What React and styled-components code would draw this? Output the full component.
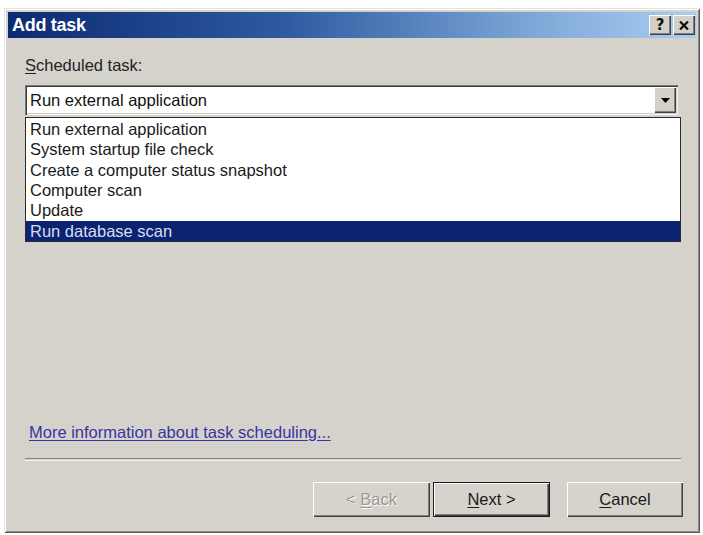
import React from "react";
import styled, { createGlobalStyle } from "styled-components";

const Global = createGlobalStyle`
  html, body { margin: 0; padding: 0; background: #ffffff; }
  body { font-family: "Liberation Sans", Arial, sans-serif; }
`;

const Page = styled.div`
  width: 703px;
  height: 535px;
  padding: 8px 0 0 4px;
  box-sizing: border-box;
`;

const Window = styled.div`
  width: 696px;
  height: 525px;
  box-sizing: border-box;
  padding: 4px;
  background: #d5d2cb;
  box-shadow: inset 1px 1px 0 #e4e2dc, inset -1px -1px 0 #5a5a58,
    inset 2px 2px 0 #ffffff, inset -2px -2px 0 #8e8c88;
  display: flex;
  flex-direction: column;
`;

const TitleBar = styled.div`
  height: 26px;
  background: linear-gradient(to right, #0c2a72 0%, #2e5aa0 40%, #86aedc 80%, #a9cdf2 100%);
  display: flex;
  align-items: center;
  padding: 0 1px 0 4px;
`;

const Title = styled.div`
  flex: 1;
  color: #ffffff;
  font-weight: bold;
  font-size: 18px;
  letter-spacing: -0.3px;
`;

const CaptionButton = styled.div`
  width: 22px;
  height: 20px;
  margin-left: 2px;
  box-sizing: border-box;
  background: #d4d0c8;
  box-shadow: inset 1px 1px 0 #ffffff, inset -1px -1px 0 #404040, inset -2px -2px 0 #808080;
  display: flex;
  align-items: center;
  justify-content: center;
  font-weight: bold;
  font-size: 15px;
  color: #111;
  font-family: "DejaVu Sans", sans-serif;
`;

const Body = styled.div`
  flex: 1;
  display: flex;
  flex-direction: column;
  padding: 18px 15px 12px 17px;
  font-size: 16.5px;
  color: #111;
`;

const Label = styled.div`
  line-height: 18px;
  height: 18px;
  color: #222;
`;

const Access = styled.span`
  text-decoration: underline;
  text-underline-offset: 2px;
`;

const Combo = styled.div`
  margin-top: 11px;
  margin-right: 3px;
  height: 30px;
  box-sizing: border-box;
  background: #ffffff;
  box-shadow: inset 1px 1px 0 #7e7c78, inset 2px 2px 0 #3a3a3a, inset -1px -1px 0 #f4f4f2,
    inset -2px -2px 0 #d4d0c8;
  display: flex;
  align-items: center;
  padding: 2px;
`;

const ComboText = styled.div`
  flex: 1;
  padding-left: 3px;
`;

const DropButton = styled.div`
  width: 22px;
  height: 26px;
  box-sizing: border-box;
  background: #d4d0c8;
  box-shadow: inset 1px 1px 0 #ffffff, inset -1px -1px 0 #404040, inset -2px -2px 0 #808080;
  display: flex;
  align-items: center;
  justify-content: center;
`;

const List = styled.div`
  margin-top: 2px;
  height: 125px;
  box-sizing: border-box;
  border: 1px solid #2a2a2a;
  background: #ffffff;
  padding-top: 1px;
  display: flex;
  flex-direction: column;
`;

const Item = styled.div`
  height: 20.5px;
  line-height: 20px;
  padding-left: 4px;
  background: ${(p) => (p.$selected ? "#0b2370" : "transparent")};
  color: ${(p) => (p.$selected ? "#d8deef" : "#1a1a1a")};
`;

const Spacer = styled.div`
  flex: 1;
`;

const Link = styled.a`
  color: #3a33a6;
  text-decoration: underline;
  text-underline-offset: 2px;
  margin-left: 4px;
  line-height: 20px;
  cursor: pointer;
`;

const Separator = styled.div`
  margin-top: 16px;
  height: 1px;
  border-top: 1px solid #8a8884;
  border-bottom: 1px solid #f4f3f0;
`;

const ButtonRow = styled.div`
  margin-top: 21px;
  margin-right: -2px;
  display: flex;
  justify-content: flex-end;
`;

const Button = styled.div`
  width: ${(p) => p.$w || 117}px;
  height: 35px;
  box-sizing: border-box;
  margin-left: ${(p) => p.$gap || 0}px;
  background: #d6d3cc;
  box-shadow: ${(p) =>
    p.$default
      ? "inset 0 0 0 1px #1a1a1a, inset 2px 2px 0 #ffffff, inset -2px -2px 0 #404040, inset -3px -3px 0 #808080"
      : "inset 1px 1px 0 #ffffff, inset -1px -1px 0 #404040, inset -2px -2px 0 #808080"};
  display: flex;
  align-items: center;
  justify-content: center;
  color: ${(p) => (p.$disabled ? "#9a9893" : "#1a1a1a")};
  text-shadow: ${(p) => (p.$disabled ? "1px 1px 0 #ffffff" : "none")};
`;

const items = [
  "Run external application",
  "System startup file check",
  "Create a computer status snapshot",
  "Computer scan",
  "Update",
  "Run database scan",
];

export default function App() {
  return (
    <>
      <Global />
      <Page>
        <Window>
          <TitleBar>
            <Title>Add task</Title>
            <CaptionButton>?</CaptionButton>
            <CaptionButton>
              <svg width="10" height="9" viewBox="0 0 10 9">
                <path d="M1 0.5 L9 8.5 M9 0.5 L1 8.5" stroke="#111" strokeWidth="2.2" />
              </svg>
            </CaptionButton>
          </TitleBar>
          <Body>
            <Label>
              <Access>S</Access>cheduled task:
            </Label>
            <Combo>
              <ComboText>Run external application</ComboText>
              <DropButton>
                <svg width="9" height="5" viewBox="0 0 9 5">
                  <path d="M0 0 H9 L4.5 5 Z" fill="#000" />
                </svg>
              </DropButton>
            </Combo>
            <List>
              {items.map((t, i) => (
                <Item key={t} $selected={i === items.length - 1}>
                  {t}
                </Item>
              ))}
            </List>
            <Spacer />
            <div>
              <Link>More information about task scheduling...</Link>
            </div>
            <Separator />
            <ButtonRow>
              <Button $disabled>
                &lt;&nbsp;<Access>B</Access>ack
              </Button>
              <Button $default $gap={3}>
                <Access>N</Access>ext &gt;
              </Button>
              <Button $gap={17} $w={116}>
                <Access>C</Access>ancel
              </Button>
            </ButtonRow>
          </Body>
        </Window>
      </Page>
    </>
  );
}
